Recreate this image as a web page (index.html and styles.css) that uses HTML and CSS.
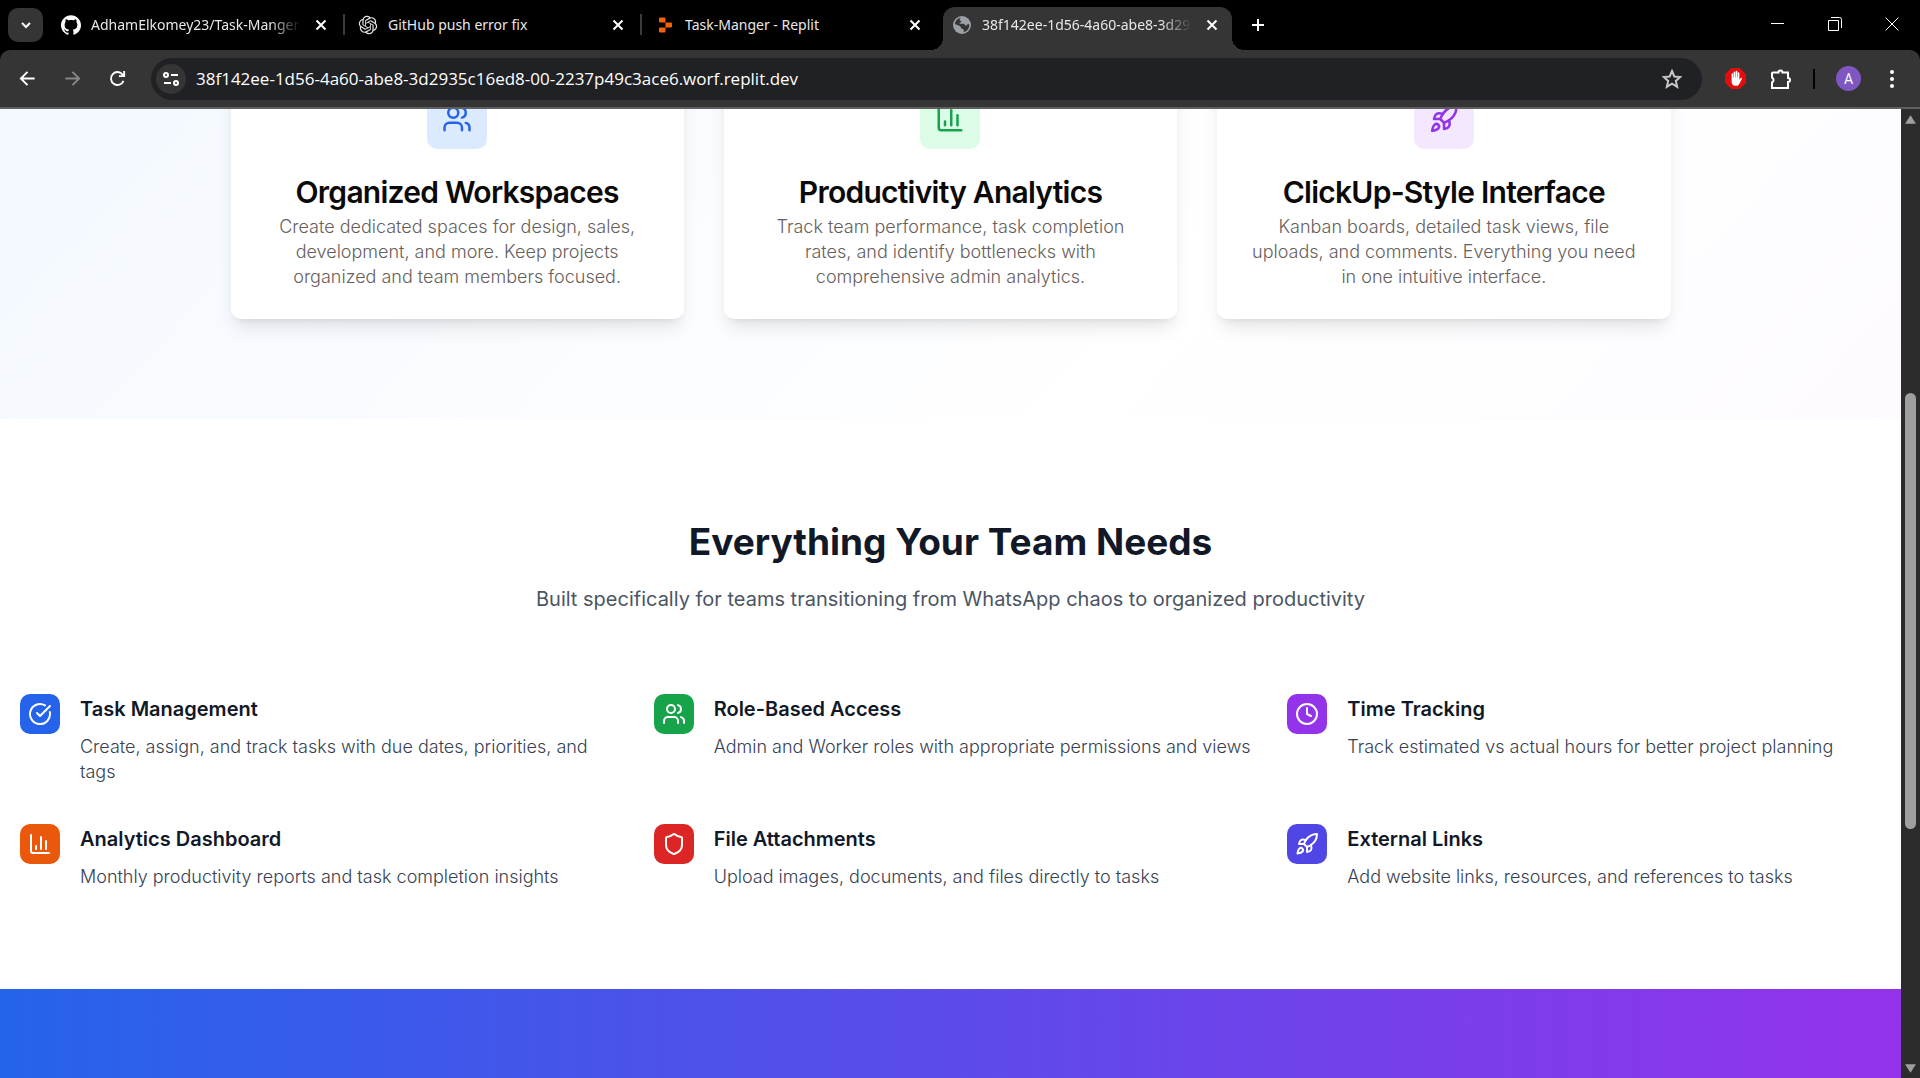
FILE: index.html
```html
<!DOCTYPE html>
<html lang="en">
<head>
<meta charset="utf-8">
<meta name="viewport" content="width=device-width, initial-scale=1">
<title>Task-Manger</title>
<link rel="stylesheet" href="styles.css">
</head>
<body>
<svg class="sprite" aria-hidden="true">
  <symbol id="users" viewBox="0 0 24 24"><path d="M16 21v-2a4 4 0 0 0-4-4H6a4 4 0 0 0-4 4v2"/><circle cx="9" cy="7" r="4"/><path d="M22 21v-2a4 4 0 0 0-3-3.87"/><path d="M16 3.13a4 4 0 0 1 0 7.75"/></symbol>
  <symbol id="chart" viewBox="0 0 24 24"><path d="M3 3v16a2 2 0 0 0 2 2h16"/><path d="M18 17V9"/><path d="M13 17V5"/><path d="M8 17v-3"/></symbol>
  <symbol id="rocket" viewBox="0 0 24 24"><path d="M4.5 16.5c-1.5 1.26-2 5-2 5s3.74-.5 5-2c.71-.84.7-2.13-.09-2.91a2.18 2.18 0 0 0-2.91-.09z"/><path d="m12 15-3-3a22 22 0 0 1 2-3.95A12.88 12.88 0 0 1 22 2c0 2.72-.78 7.5-6 11a22.35 22.35 0 0 1-4 2z"/><path d="M9 12H4s.55-3.03 2-4c1.62-1.08 5 0 5 0"/><path d="M12 15v5s3.03-.55 4-2c1.08-1.62 0-5 0-5"/></symbol>
  <symbol id="check" viewBox="0 0 24 24"><path d="M21.801 10A10 10 0 1 1 17 3.335"/><path d="m9 11 3 3L22 4"/></symbol>
  <symbol id="clock" viewBox="0 0 24 24"><circle cx="12" cy="12" r="10"/><path d="M12 6v6l4 2"/></symbol>
  <symbol id="shield" viewBox="0 0 24 24"><path d="M20 13c0 5-3.5 7.5-7.66 8.95a1 1 0 0 1-.67-.01C7.5 20.5 4 18 4 13V6a1 1 0 0 1 1-1c2 0 4.5-1.2 6.24-2.72a1.17 1.17 0 0 1 1.52 0C14.51 3.81 17 5 19 5a1 1 0 0 1 1 1z"/></symbol>
  <symbol id="close" viewBox="0 0 12 12"><path d="M1.500 1.500l9 9m0-9l-9 9"/></symbol>
</svg>

<header class="browser">
  <div class="tabstrip">
    <button class="tab-search" aria-label="Search tabs"><svg viewBox="0 0 12 12"><path d="M2 4l4 4 4-4"/></svg></button>
    <div class="tabs">
      <div class="tab">
        <svg class="favicon" viewBox="0 0 24 24" fill="#fff"><path d="M12 .297c-6.63 0-12 5.373-12 12 0 5.303 3.438 9.800 8.205 11.385.6.113.82-.258.82-.577 0-.285-.01-1.040-.015-2.040-3.338.724-4.042-1.610-4.042-1.610C4.422 18.070 3.633 17.700 3.633 17.700c-1.087-.744.084-.729.084-.729 1.205.084 1.838 1.236 1.838 1.236 1.070 1.835 2.809 1.305 3.495.998.108-.776.417-1.305.76-1.605-2.665-.3-5.466-1.332-5.466-5.930 0-1.310.465-2.380 1.235-3.220-.135-.303-.54-1.523.105-3.176 0 0 1.005-.322 3.300 1.230.96-.267 1.980-.399 3-.405 1.020.006 2.040.138 3 .405 2.280-1.552 3.285-1.230 3.285-1.230.645 1.653.24 2.873.12 3.176.765.840 1.230 1.910 1.230 3.220 0 4.610-2.805 5.625-5.475 5.920.42.360.81 1.096.81 2.220 0 1.606-.015 2.896-.015 3.286 0 .315.210.690.825.570C20.565 22.092 24 17.592 24 12.297c0-6.627-5.373-12-12-12"/></svg>
        <span class="tab-title fade">AdhamElkomey23/Task-Manger</span>
        <button class="tab-close" aria-label="Close tab"><svg><use href="#close"/></svg></button>
      </div>
      <div class="tab divided">
        <svg class="favicon" viewBox="-1 -1 26 26" fill="#e3e3e3"><path d="M22.2819 9.8211a5.9847 5.9847 0 0 0-.5157-4.9108 6.0462 6.0462 0 0 0-6.5098-2.9A6.0651 6.0651 0 0 0 4.9807 4.1818a5.9847 5.9847 0 0 0-3.9977 2.9 6.0462 6.0462 0 0 0 .7427 7.0966 5.98 5.98 0 0 0 .511 4.9107 6.051 6.051 0 0 0 6.5146 2.9001A5.9847 5.9847 0 0 0 13.2599 24a6.0557 6.0557 0 0 0 5.7718-4.2058 5.9894 5.9894 0 0 0 3.9977-2.9001 6.0557 6.0557 0 0 0-.7475-7.073zm-9.022 12.6081a4.4755 4.4755 0 0 1-2.8764-1.0408l.1419-.0804 4.7783-2.7582a.7948.7948 0 0 0 .3927-.6813v-6.7369l2.02 1.1686a.071.071 0 0 1 .038.052v5.5826a4.504 4.504 0 0 1-4.4945 4.4944zm-9.6607-4.1254a4.4708 4.4708 0 0 1-.5346-3.0137l.142.0852 4.783 2.7582a.7712.7712 0 0 0 .7806 0l5.8428-3.3685v2.3324a.0804.0804 0 0 1-.0332.0615L9.74 19.9502a4.4992 4.4992 0 0 1-6.1408-1.6464zM2.3408 7.8956a4.485 4.485 0 0 1 2.3655-1.9728V11.6a.7664.7664 0 0 0 .3879.6765l5.8144 3.3543-2.0201 1.1685a.0757.0757 0 0 1-.071 0l-4.8303-2.7865A4.504 4.504 0 0 1 2.3408 7.872zm16.5963 3.8558L13.1038 8.364 15.1192 7.2a.0757.0757 0 0 1 .071 0l4.8303 2.7913a4.4944 4.4944 0 0 1-.6765 8.1042v-5.6772a.79.79 0 0 0-.407-.667zm2.0107-3.0231l-.142-.0852-4.7735-2.7818a.7759.7759 0 0 0-.7854 0L9.409 9.2297V6.8974a.0662.0662 0 0 1 .0284-.0615l4.8303-2.7866a4.4992 4.4992 0 0 1 6.6802 4.66zM8.3065 12.863l-2.02-1.1638a.0804.0804 0 0 1-.038-.0567V6.0742a4.4992 4.4992 0 0 1 7.3757-3.4537l-.142.0805L8.704 5.459a.7948.7948 0 0 0-.3927.6813zm1.0976-2.3654l2.602-1.4998 2.6069 1.4998v2.9994l-2.5974 1.4997-2.6067-1.4997Z"/></svg>
        <span class="tab-title">GitHub push error fix</span>
        <button class="tab-close" aria-label="Close tab"><svg><use href="#close"/></svg></button>
      </div>
      <div class="tab divided">
        <svg class="favicon" viewBox="0 0 20 20" fill="#f26207"><path d="M4 3.500a1 1 0 0 1 1-1h4.500a1 1 0 0 1 1 1V7.500H5a1 1 0 0 1-1-1zM10.500 7.500H16a1 1 0 0 1 1 1v3a1 1 0 0 1-1 1h-5.500zM4 13.500a1 1 0 0 1 1-1h5.500v4a1 1 0 0 1-1 1H5a1 1 0 0 1-1-1z"/></svg>
        <span class="tab-title">Task-Manger - Replit</span>
        <button class="tab-close" aria-label="Close tab"><svg><use href="#close"/></svg></button>
      </div>
      <div class="tab active">
        <svg class="favicon" viewBox="0 0 20 20"><circle cx="10" cy="10" r="9" fill="#9aa0a6"/><path fill="#353535" d="M9 2.800c-1 .6-1.600 1.200-1.300 2.200.4 1 1.600.6 1.600 1.600s-1.800.8-1.800 2.200h3.700c1.200 0 1.800.8 1.800 1.800h1.600c.5-1.700 1.500-1.600 2.700-1.200.3 3.600-2 6.800-5.300 7.600-.6-1.200.2-2-.6-2.800-.9-.6-2.300-.2-2.500-1.800-.1-1-.9-1-1.700-1.600L2.900 8.900C3.400 5.500 5.800 3.100 9 2.800z"/></svg>
        <span class="tab-title fade">38f142ee-1d56-4a60-abe8-3d2935c16ed8</span>
        <button class="tab-close" aria-label="Close tab"><svg><use href="#close"/></svg></button>
      </div>
    </div>
    <button class="new-tab" aria-label="New tab"><svg viewBox="0 0 14 14"><path d="M7 1v12M1 7h12"/></svg></button>
    <div class="window-controls">
      <button aria-label="Minimize"><svg viewBox="0 0 14 14"><path d="M0 6.500h13"/></svg></button>
      <button aria-label="Restore"><svg viewBox="0 0 14 14"><path d="M.5 3.500h10v10h-10zM3 .5h8.500a2 2 0 0 1 2 2V11"/></svg></button>
      <button aria-label="Close"><svg viewBox="0 0 14 14"><path d="M.5.5l13 13m0-13l-13 13"/></svg></button>
    </div>
  </div>

  <div class="toolbar">
    <button class="nav" aria-label="Back"><svg viewBox="0 0 20 20"><path d="M17.500 10H3M10 3l-7 7 7 7"/></svg></button>
    <button class="nav" aria-label="Forward" disabled><svg viewBox="0 0 20 20"><path d="M2.500 10H17M10 3l7 7-7 7"/></svg></button>
    <button class="nav" aria-label="Reload"><svg viewBox="0 0 20 20"><path d="M16.300 12.500A6.800 6.800 0 1 1 15.500 6L17 7.500M17 2v5.500h-5.500"/></svg></button>
    <div class="address">
      <button class="site-info" aria-label="View site information"><svg viewBox="0 0 18 18"><circle cx="4" cy="5" r="2"/><path d="M9 5h7M2 13h7"/><circle cx="14" cy="13" r="2"/></svg></button>
      <input class="url" type="text" aria-label="Address" value="38f142ee-1d56-4a60-abe8-3d2935c16ed8-00-2237p49c3ace6.worf.replit.dev">
      <button class="star" aria-label="Bookmark this tab"><svg viewBox="0 0 20 20"><path d="M10 2l2.300 5.500 6 .5-4.500 3.900 1.400 5.900L10 14.600l-5.200 3.200 1.400-5.900L1.700 8l6-.5z"/></svg></button>
    </div>
    <button class="extension" aria-label="Ad blocker"><svg viewBox="0 0 20 20"><path fill="#e40d0d" d="M6 0h8l6 6v8l-6 6H6l-6-6V6z"/><path fill="#fff" d="M6.300 11V5.800c0-1.100 1.500-1.100 1.500 0V9h.4V4.200c0-1.200 1.600-1.200 1.600 0V9h.4V3.500c0-1.200 1.600-1.200 1.600 0V9h.4V4.800c0-1.100 1.500-1.100 1.500 0v6.400l1.200-1.500c.8-.9 1.700-.1 1.100.8l-2.300 4.400C13 16.300 12 17 10.500 17 7.500 17 6.300 15 6.300 12.500z"/></svg></button>
    <button class="extension puzzle" aria-label="Extensions"><svg viewBox="0 0 22 22"><path d="M3 4.500h5.500a2 2 0 0 1 4 0H18V10a2 2 0 0 1 0 4v6H2v-5.500a2.800 2.800 0 0 0 0-5V5.500a1 1 0 0 1 1-1z"/></svg></button>
    <span class="divider"></span>
    <button class="avatar" aria-label="Profile">A</button>
    <button class="menu" aria-label="Menu"><svg viewBox="0 0 4 18"><circle cx="2" cy="2" r="2"/><circle cx="2" cy="9" r="2"/><circle cx="2" cy="16" r="2"/></svg></button>
  </div>
</header>

<div class="viewport">
  <main class="page">
    <section class="hero">
      <div class="cards">
        <article class="card">
          <div class="card-icon blue"><svg><use href="#users"/></svg></div>
          <h3>Organized Workspaces</h3>
          <p>Create dedicated spaces for design, sales, development, and more. Keep projects organized and team members focused.</p>
        </article>
        <article class="card">
          <div class="card-icon green"><svg><use href="#chart"/></svg></div>
          <h3>Productivity Analytics</h3>
          <p>Track team performance, task completion rates, and identify bottlenecks with comprehensive admin analytics.</p>
        </article>
        <article class="card">
          <div class="card-icon purple"><svg><use href="#rocket"/></svg></div>
          <h3>ClickUp-Style Interface</h3>
          <p>Kanban boards, detailed task views, file uploads, and comments. Everything you need in one intuitive interface.</p>
        </article>
      </div>
    </section>

    <section class="features">
      <h2>Everything Your Team Needs</h2>
      <p class="lead">Built specifically for teams transitioning from WhatsApp chaos to organized productivity</p>
      <div class="feature-grid">
        <div class="feature">
          <div class="tile bg-blue"><svg><use href="#check"/></svg></div>
          <div class="feature-text"><h3>Task Management</h3><p>Create, assign, and track tasks with due dates, priorities, and tags</p></div>
        </div>
        <div class="feature">
          <div class="tile bg-green"><svg><use href="#users"/></svg></div>
          <div class="feature-text"><h3>Role-Based Access</h3><p>Admin and Worker roles with appropriate permissions and views</p></div>
        </div>
        <div class="feature">
          <div class="tile bg-purple"><svg><use href="#clock"/></svg></div>
          <div class="feature-text"><h3>Time Tracking</h3><p>Track estimated vs actual hours for better project planning</p></div>
        </div>
        <div class="feature">
          <div class="tile bg-orange"><svg><use href="#chart"/></svg></div>
          <div class="feature-text"><h3>Analytics Dashboard</h3><p>Monthly productivity reports and task completion insights</p></div>
        </div>
        <div class="feature">
          <div class="tile bg-red"><svg><use href="#shield"/></svg></div>
          <div class="feature-text"><h3>File Attachments</h3><p>Upload images, documents, and files directly to tasks</p></div>
        </div>
        <div class="feature">
          <div class="tile bg-indigo"><svg><use href="#rocket"/></svg></div>
          <div class="feature-text"><h3>External Links</h3><p>Add website links, resources, and references to tasks</p></div>
        </div>
      </div>
    </section>

    <section class="cta"></section>
  </main>
  <div class="scrollbar">
    <svg viewBox="0 0 12 10"><path d="M6 1l5 8H1z"/></svg>
    <div class="track"><div class="thumb"></div></div>
    <svg viewBox="0 0 12 10"><path d="M6 9l5-8H1z"/></svg>
  </div>
</div>
</body>
</html>
```

FILE: styles.css
```css
* { box-sizing: border-box; }

body {
  margin: 0;
  height: 100vh;
  display: flex;
  flex-direction: column;
  overflow: hidden;
  background: #fff;
  font-family: Inter, sans-serif;
}

h2, h3, p { margin: 0; }

button {
  border: 0;
  padding: 0;
  background: none;
  color: inherit;
  font: inherit;
  display: flex;
  align-items: center;
  justify-content: center;
}

svg { display: block; flex: none; }
.sprite { position: absolute; width: 0; height: 0; }

/* Browser chrome */
.browser {
  flex: none;
  background: #000;
  color: #fff;
  font-family: "Noto Sans", "Open Sans", sans-serif;
}
.browser button svg { fill: none; stroke: #fff; stroke-width: 2; }

.tabstrip {
  height: 50px;
  display: flex;
  align-items: flex-start;
  padding-left: 8px;
}
.tab-search {
  width: 35px;
  height: 34px;
  margin-top: 8px;
  border-radius: 10px;
  background: #353535;
}
.tab-search svg { width: 12px; height: 12px; }

.tabs {
  flex: 0 1 1180px;
  display: flex;
  gap: 8px;
  margin-left: 9px;
  min-width: 0;
}
.tab {
  flex: 1;
  min-width: 0;
  height: 43px;
  margin-top: 7px;
  display: flex;
  align-items: center;
  padding: 0 10px 7px 9px;
  position: relative;
}
.favicon { width: 20px; height: 20px; }
.tab-title {
  flex: 1;
  min-width: 0;
  margin-left: 10px;
  overflow: hidden;
  white-space: nowrap;
  font-size: 14px;
  line-height: 20px;
  color: #e8e8e8;
}
.fade { mask-image: linear-gradient(to right, #000 85%, transparent); }
.tab-close { width: 20px; height: 20px; margin-left: 10px; }
.tab-close svg { width: 12px; height: 12px; }

.divided::before {
  content: "";
  position: absolute;
  left: -6px;
  top: 7px;
  width: 2px;
  height: 21px;
  background: #3c3c3c;
}

.active {
  background: #353535;
  border-radius: 12px 12px 0 0;
}
/* Concave feet where the active tab meets the toolbar */
.active::before, .active::after {
  content: "";
  position: absolute;
  bottom: 0;
  width: 12px;
  height: 12px;
}
.active::before { right: 100%; background: radial-gradient(circle at 0 0, transparent 12px, #353535 12px); }
.active::after { left: 100%; background: radial-gradient(circle at 100% 0, transparent 12px, #353535 12px); }

.new-tab { width: 34px; height: 34px; margin: 8px 0 0 9px; }
.new-tab svg { width: 14px; height: 14px; }

.window-controls { display: flex; margin-left: auto; }
.window-controls button { width: 57px; height: 48px; }
.browser .window-controls svg { width: 14px; height: 14px; stroke-width: 1; }

.toolbar {
  height: 59px;
  display: flex;
  align-items: center;
  padding: 0 10px 0 5px;
  background: #353535;
  border-bottom: 2px solid #5f5f5f;
  border-radius: 10px 10px 0 0;
}
.nav { width: 45px; height: 44px; }
.nav svg { width: 19px; height: 19px; }
.nav:disabled { opacity: 0.4; }

.address {
  flex: 1;
  min-width: 0;
  height: 42px;
  display: flex;
  align-items: center;
  margin-left: 11px;
  padding: 0 20px 0 5px;
  border-radius: 21px;
  background: #202124;
}
.site-info {
  width: 30px;
  height: 30px;
  border-radius: 50%;
  background: #353535;
}
.site-info svg { width: 18px; height: 18px; }
.url {
  flex: 1;
  min-width: 0;
  margin: 0;
  padding: 0 10px;
  border: 0;
  outline: 0;
  background: none;
  color: #fff;
  font-family: "Open Sans", sans-serif;
  font-size: 17px;
  line-height: 24px;
}
.browser .star svg { width: 20px; height: 20px; stroke: #c7c7c7; }

.extension { width: 22px; height: 44px; margin-left: 22px; }
.browser .extension svg { width: 21px; height: 21px; stroke: none; }
.browser .puzzle svg { width: 22px; height: 22px; stroke: #fff; }
.puzzle { margin-left: 24px; }
.divider { width: 2px; height: 20px; margin: 0 21px; background: #000; }
.avatar {
  width: 25px;
  height: 25px;
  border-radius: 50%;
  background: #7e57c2;
  font-family: Roboto, sans-serif;
  font-size: 14px;
}
.menu { width: 36px; height: 44px; margin-left: 13px; }
.browser .menu svg { width: 4px; height: 18px; fill: #fff; stroke: none; }

/* Page area */
.viewport {
  flex: 1;
  min-height: 0;
  display: flex;
  overflow: hidden;
}
.page {
  flex: 1;
  min-width: 0;
  display: flex;
  flex-direction: column;
}

/* The page is scrolled down, so the hero starts above the visible area.
   Its gradient runs over the full document height, not just the hero. */
.hero {
  flex: none;
  min-height: 897px;
  margin-top: -587px;
  padding: 0 20px 100px;
  display: flex;
  flex-direction: column;
  justify-content: flex-end;
  background: linear-gradient(to bottom right, #eff6ff, #fff, #faf5ff) no-repeat 0 0 / 100% 2062px;
}
.cards {
  width: 100%;
  max-width: 1440px;
  margin: 0 auto;
  display: grid;
  grid-template-columns: repeat(3, 1fr);
  gap: 40px;
}
.card {
  display: flex;
  flex-direction: column;
  align-items: center;
  padding: 30px;
  border-radius: 10px;
  background: #fff;
  text-align: center;
  box-shadow: 0 12px 19px -4px rgba(0, 0, 0, 0.1), 0 5px 8px -5px rgba(0, 0, 0, 0.1);
}
.card-icon {
  width: 60px;
  height: 60px;
  margin-bottom: 28px;
  display: flex;
  align-items: center;
  justify-content: center;
  border-radius: 10px;
}
.card-icon svg { width: 30px; height: 30px; }
.card-icon svg, .tile svg {
  fill: none;
  stroke: currentColor;
  stroke-width: 2;
  stroke-linecap: round;
  stroke-linejoin: round;
}
.blue { background: #dbeafe; color: #2563eb; }
.green { background: #dcfce7; color: #16a34a; }
.purple { background: #f3e8ff; color: #9333ea; }

.card h3 {
  margin-bottom: 7px;
  font-size: 30px;
  font-weight: 600;
  line-height: 30px;
  letter-spacing: -0.025em;
  color: #0c0a09;
}
.card p {
  max-width: 384px;
  font-size: 18px;
  font-weight: 300;
  line-height: 25px;
  color: #67605c;
}

.features {
  flex: none;
  padding: 100px 20px;
  background: #fff;
}
.features h2 {
  margin-bottom: 20px;
  font-size: 37px;
  font-weight: 700;
  line-height: 45px;
  text-align: center;
  color: #111827;
}
.lead {
  margin-bottom: 80px;
  font-size: 20px;
  line-height: 30px;
  text-align: center;
  color: #4b5563;
}
.feature-grid {
  display: grid;
  grid-template-columns: repeat(3, 1fr);
  gap: 40px;
}
.feature {
  display: flex;
  align-items: flex-start;
  gap: 20px;
}
/* Lets a line of text run slightly into the column gap */
.feature-text { margin-right: -6px; }
.tile {
  flex: none;
  width: 40px;
  height: 40px;
  display: flex;
  align-items: center;
  justify-content: center;
  border-radius: 10px;
  color: #fff;
}
.tile svg { width: 24px; height: 24px; }
.bg-blue { background: #2563eb; }
.bg-green { background: #16a34a; }
.bg-purple { background: #9333ea; }
.bg-orange { background: #ea580c; }
.bg-red { background: #dc2626; }
.bg-indigo { background: #4f46e5; }

.feature h3 {
  margin-bottom: 10px;
  font-size: 20px;
  font-weight: 600;
  line-height: 30px;
  color: #111827;
}
.feature p {
  font-size: 18px;
  font-weight: 300;
  line-height: 25px;
  color: #374151;
}

.cta {
  flex: 1 0 80px;
  background: linear-gradient(to right, #2563eb, #9333ea);
}

.scrollbar {
  flex: none;
  width: 19px;
  display: flex;
  flex-direction: column;
  align-items: center;
  padding: 5px 0 4px;
  background: #2c2c2c;
}
.scrollbar svg { width: 13px; height: 11px; fill: #9f9f9f; }
.track {
  flex: 1;
  width: 11px;
  padding-top: 268px;
}
.thumb {
  height: 65%;
  border-radius: 6px;
  background: #9f9f9f;
}
```
